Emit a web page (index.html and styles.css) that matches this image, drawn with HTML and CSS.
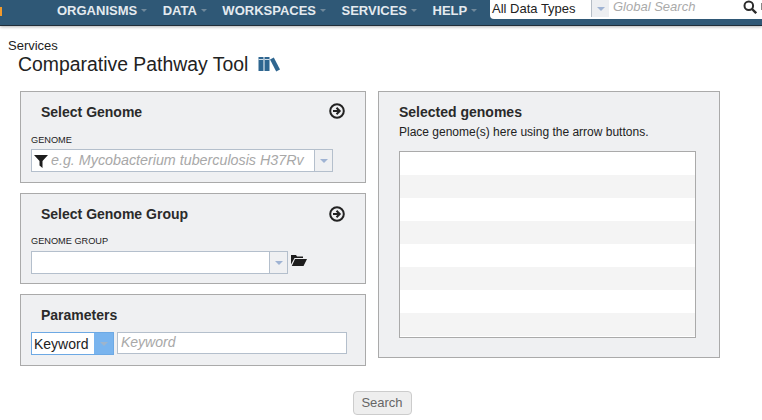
FILE: index.html
```html
<!DOCTYPE html>
<html lang="en">

<head>
  <meta charset="UTF-8">
  <title>Comparative Pathway Tool</title>
  <link rel="stylesheet" href="styles.css">
</head>

<body>
  <header class="topbar">
    <div class="logo-bit"></div>
    <nav class="nav">
      <a class="nav-item">ORGANISMS<span class="caret"></span></a>
      <a class="nav-item">DATA<span class="caret"></span></a>
      <a class="nav-item">WORKSPACES<span class="caret"></span></a>
      <a class="nav-item">SERVICES<span class="caret"></span></a>
      <a class="nav-item">HELP<span class="caret"></span></a>
    </nav>
    <div class="global-search">
      <span class="type-value">All Data Types</span>
      <span class="type-arrow"><span class="arrow"></span></span>
      <span class="search-text">Global Search</span>
      <svg class="search-icon" viewBox="0 0 14 14" width="14" height="14">
        <circle cx="5.800" cy="5.800" r="4.300" fill="none" stroke="#2b2b2b" stroke-width="2"></circle>
        <path d="M9 9l4.200 4.200" stroke="#2b2b2b" stroke-width="2.400"></path>
      </svg>
      <span class="search-sliver"></span>
    </div>
  </header>

  <div class="crumb">Services</div>
  <h1 class="page-title">Comparative Pathway Tool
    <svg class="title-icon" viewBox="0 0 22 16" width="22" height="16">
      <path d="M0.500 1h5v14h-5zM6.500 1h5v14h-5z" fill="#2f6690"></path>
      <path d="M0.500 3.500h5M6.500 3.500h5" stroke="#cfdde8" stroke-width="1"></path>
      <path d="M12 3.500l3.800-2L22 13.500l-3.800 2z" fill="#2f6690"></path>
    </svg>
  </h1>

  <main class="columns">
    <div class="left-col">
      <section class="panel panel-genome">
        <div class="panel-head">
          <h2>Select Genome</h2>
          <svg class="add-icon" viewBox="0 0 16 16" width="16" height="16">
            <circle cx="8" cy="8" r="6.800" fill="none" stroke="#222" stroke-width="2"></circle>
            <path d="M4 8h6M7.500 4.800L10.700 8l-3.200 3.200" fill="none" stroke="#222" stroke-width="2"></path>
          </svg>
        </div>
        <label class="field-label">GENOME</label>
        <div class="combo">
          <svg class="filter-icon" viewBox="0 0 14 14" width="14" height="14">
            <path d="M0 1h14L8.500 7v7L5.500 11.500V7z" fill="#1d1d1d"></path>
          </svg>
          <span class="placeholder">e.g. Mycobacterium tuberculosis H37Rv</span>
          <span class="combo-arrow"><span class="arrow"></span></span>
        </div>
      </section>

      <section class="panel panel-group">
        <div class="panel-head">
          <h2>Select Genome Group</h2>
          <svg class="add-icon" viewBox="0 0 16 16" width="16" height="16">
            <circle cx="8" cy="8" r="6.800" fill="none" stroke="#222" stroke-width="2"></circle>
            <path d="M4 8h6M7.500 4.800L10.700 8l-3.200 3.200" fill="none" stroke="#222" stroke-width="2"></path>
          </svg>
        </div>
        <label class="field-label">GENOME GROUP</label>
        <div class="group-row">
          <div class="combo combo-group">
            <span class="combo-arrow"><span class="arrow"></span></span>
          </div>
          <svg class="folder-icon" viewBox="0 0 16 12" width="16" height="12">
            <path d="M0 1h5l1 1.500h6V4H3.500L0 10.500zM4 5h12l-3.500 7H.8z" fill="#1d1d1d"></path>
          </svg>
        </div>
      </section>

      <section class="panel panel-params">
        <h2>Parameters</h2>
        <div class="param-row">
          <div class="keyword-select">
            <span class="keyword-value">Keyword</span>
            <span class="keyword-arrow"><span class="arrow"></span></span>
          </div>
          <div class="keyword-input">Keyword</div>
        </div>
      </section>
    </div>

    <section class="panel panel-selected">
      <h2>Selected genomes</h2>
      <p>Place genome(s) here using the arrow buttons.</p>
      <div class="grid">
        <div class="grid-row"></div>
        <div class="grid-row"></div>
        <div class="grid-row"></div>
        <div class="grid-row"></div>
        <div class="grid-row"></div>
        <div class="grid-row"></div>
        <div class="grid-row"></div>
        <div class="grid-row"></div>
      </div>
    </section>
  </main>

  <div class="actions">
    <button class="search-btn">Search</button>
  </div>
</body>

</html>
```

FILE: styles.css
```css
html,
body {
  height: 420px;
  overflow: hidden;
}

body {
  font-family: "Liberation Sans", Arial, sans-serif;
  margin: 0;
  padding: 0;
  background-color: #fff;
  color: #222;
}

.topbar {
  display: flex;
  height: 26px;
  background-color: #2f5876;
  border-bottom: 1px solid #1f2d38;
  box-shadow: 0 1px 3px rgba(0, 0, 0, 0.3);
  box-sizing: border-box;
}

.logo-bit {
  flex: none;
  width: 2px;
  height: 9px;
  margin-top: 7px;
  background-color: #f39a2b;
}

.nav {
  display: flex;
  flex: none;
  width: 433px;
  height: 20px;
  margin-left: 55px;
  gap: 15.500px;
}

.nav-item {
  display: flex;
  align-items: center;
  font-size: 13px;
  font-weight: bold;
  color: #e4eaef;
}

.caret {
  width: 0;
  height: 0;
  margin-left: 4px;
  border-left: 3.500px solid transparent;
  border-right: 3.500px solid transparent;
  border-top: 3.500px solid #71899b;
}

.global-search {
  display: flex;
  flex: none;
  width: 272px;
  height: 19px;
  background-color: #fff;
  border-bottom-left-radius: 4px;
}

.type-value {
  width: 101px;
  padding-left: 2px;
  font-size: 13px;
  line-height: 17px;
  color: #222;
  box-sizing: border-box;
}

.type-arrow {
  display: flex;
  width: 18px;
  height: 17px;
  align-items: center;
  justify-content: center;
  background-color: #eceef1;
  border-left: 1px solid #b5bdc6;
  box-sizing: border-box;
}

.arrow {
  width: 0;
  height: 0;
  border-left: 4px solid transparent;
  border-right: 4px solid transparent;
  border-top: 4px solid #9fb3d3;
}

.search-text {
  width: 134px;
  padding-left: 4px;
  font-size: 13px;
  font-style: italic;
  line-height: 13px;
  color: #aaa;
  box-sizing: border-box;
}

.search-icon {
  flex: none;
}

.search-sliver {
  flex: none;
  width: 1px;
  height: 7px;
  margin: 3px 0 0 4px;
  background-color: #888;
}

.crumb {
  margin: 13px 0 0 8px;
  font-size: 13px;
  line-height: 14px;
  color: #222;
}

.page-title {
  display: flex;
  align-items: center;
  gap: 10px;
  margin: 0 0 0 18px;
  font-size: 19.400px;
  font-weight: normal;
  line-height: 22px;
  color: #222;
}

.columns {
  display: flex;
  gap: 12px;
  margin: 16px 0 0 20px;
}

.left-col {
  display: flex;
  flex-direction: column;
  gap: 10px;
  width: 346px;
}

.panel {
  background-color: #eff0f2;
  border: 1px solid #aaa;
  box-sizing: border-box;
}

.panel h2 {
  margin: 0;
  font-size: 14px;
  font-weight: bold;
  line-height: 16px;
  color: #2a2a2a;
}

.panel-head {
  display: flex;
  justify-content: space-between;
  padding: 0 20px 0 20px;
}

.panel-genome {
  height: 92px;
  padding-top: 12px;
}

.panel-group {
  height: 91px;
  padding-top: 12px;
}

.panel-params {
  height: 72px;
  padding: 12px 0 0 10px;
}

.panel-params h2 {
  margin-left: 10px;
}

.add-icon {
  margin-top: -1px;
}

.field-label {
  display: block;
  margin: 15px 0 0 10px;
  font-size: 9.200px;
  line-height: 11px;
  color: #222;
}

.combo {
  display: flex;
  align-items: center;
  width: 302px;
  height: 23px;
  margin: 3px 0 0 10px;
  background-color: #fff;
  border: 1px solid #b4bfcc;
  box-sizing: border-box;
}

.filter-icon {
  flex: none;
  margin: 1px 0 0 2px;
}

.placeholder {
  margin: -2px 0 0 3px;
  font-size: 14.300px;
  font-style: italic;
  white-space: nowrap;
  color: #a8a8a8;
}

.combo-arrow {
  display: flex;
  flex: none;
  width: 18px;
  height: 21px;
  margin-left: auto;
  align-items: center;
  justify-content: center;
  background-color: #eff0f2;
  border-left: 1px solid #b4bfcc;
  box-sizing: border-box;
}

.panel-group .add-icon {
  margin-top: 0;
}

.panel-group .field-label {
  margin-top: 14px;
}

.group-row {
  display: flex;
  align-items: center;
  gap: 3px;
  margin: 4px 0 0 10px;
}

.combo-group {
  width: 257px;
  margin: 0;
}

.folder-icon {
  margin-top: -5px;
}

.param-row {
  display: flex;
  gap: 3px;
  margin-top: 9px;
}

.keyword-select {
  display: flex;
  align-items: center;
  width: 83px;
  height: 23px;
  background-color: #fff;
  border: 1px solid #6da9e4;
  box-sizing: border-box;
}

.keyword-value {
  flex: 1;
  padding-left: 2px;
  font-size: 14px;
  color: #222;
}

.keyword-arrow {
  display: flex;
  width: 19px;
  height: 21px;
  align-items: center;
  justify-content: center;
  background-color: #79b4ee;
}

.keyword-arrow .arrow {
  border-top-color: #9db4cc;
}

.keyword-input {
  width: 230px;
  height: 22px;
  padding-left: 3px;
  font-size: 14px;
  font-style: italic;
  line-height: 19px;
  color: #a8a8a8;
  background-color: #fff;
  border: 1px solid #b4bfcc;
  box-sizing: border-box;
}

.panel-selected {
  width: 342px;
  height: 267px;
  padding: 12px 20px 0;
}

.panel-selected p {
  margin: 5px 0 0;
  font-size: 12px;
  line-height: 14px;
  color: #222;
}

.grid {
  width: 297px;
  height: 187px;
  margin-top: 12px;
  background-color: #fff;
  border: 1px solid #aaa;
  box-sizing: border-box;
}

.grid-row {
  height: 23px;
}

.grid-row:nth-child(even) {
  background-color: #f4f4f4;
}

.actions {
  display: flex;
  justify-content: center;
  margin: 0 0 0 20px;
  width: 724px;
}

.search-btn {
  width: 59px;
  height: 24px;
  margin-top: 25px;
  padding: 0 0 2px;
  font-family: "Liberation Sans", Arial, sans-serif;
  font-size: 13px;
  color: #666;
  background-color: #eee;
  border: 1px solid #ccc;
  border-radius: 4px;
}
```
